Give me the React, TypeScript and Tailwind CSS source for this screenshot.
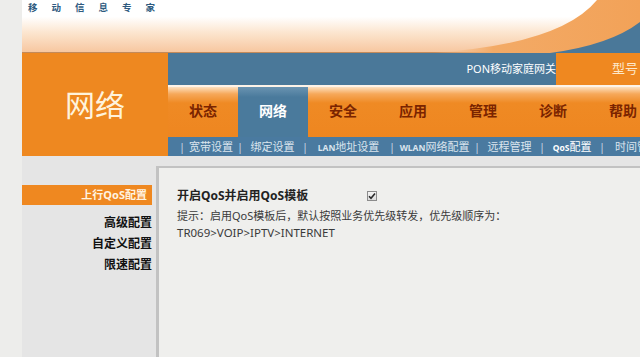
import React from 'react';

const tabs = ['状态', '网络', '安全', '应用', '管理', '诊断', '帮助'];
// [latin prefix, chinese part, segment width]
const subTabs: [string, string, number][] = [
  ['', '宽带设置', 58],
  ['', '绑定设置', 65],
  ['LAN', '地址设置', 87],
  ['WLAN', '网络配置', 85],
  ['', '远程管理', 65],
  ['QoS', '配置', 60],
  ['', '时间管理', 70],
];
const sideItems = ['高级配置', '自定义配置', '限速配置'];

function Swoosh() {
  return (
    <svg className="pointer-events-none absolute inset-0" width="618" height="53" viewBox="22 0 618 53">
      <defs>
        <linearGradient id="sw" x1="0" y1="0" x2="1" y2="0">
          <stop offset="0" stopColor="#f6c69a" stopOpacity="0" />
          <stop offset="0.3" stopColor="#f3aa66" />
          <stop offset="1" stopColor="#f2a258" />
        </linearGradient>
      </defs>
      <path d="M597 0 Q560 45 430 53 L640 53 L640 0 Z" fill="url(#sw)" />
      <path d="M550 53 Q610 45 640 22 L640 53 Z" fill="#4a7899" />
    </svg>
  );
}

function Check() {
  return (
    <span className="flex h-[10px] w-[10px] items-center justify-center border border-[#8c8c8c] bg-[linear-gradient(to_bottom,#f4f4f4,#dcdcdc)]">
      <svg width="8" height="8" viewBox="0 0 8 8">
        <path d="M1 4.2 L3 6.3 L7 1.5" fill="none" stroke="#2a2a2a" strokeWidth="1.6" />
      </svg>
    </span>
  );
}

export default function App() {
  return (
    <div className="flex h-[357px] w-[640px] overflow-hidden bg-[#ededeb] font-['Noto_Sans','Noto_Sans_CJK_SC',sans-serif]">
      {/* left margin */}
      <div className="w-[22px] shrink-0 bg-[#ededeb]" />

      <div className="flex w-[618px] shrink-0 flex-col">
        {/* header */}
        <div className="relative h-[53px] shrink-0 border-b border-[#c38a5a] bg-[linear-gradient(to_bottom,#ffffff_0%,#ffffff_32%,#fce6d0_62%,#f7c7a0_100%)]">
          <Swoosh />
          <div className="relative flex pl-[6px] pt-[1px] text-[9.5px] font-bold leading-[14px] text-[#2f5b80]">
            {'移动信息专家'.split('').map((c) => (
              <span key={c} className="w-[23.5px]">{c}</span>
            ))}
          </div>
        </div>

        {/* title + navigation */}
        <div className="flex h-[103px] shrink-0">
          <div className="flex w-[146px] shrink-0 items-center justify-center bg-[#ee8820] text-[30px] leading-none text-[#fff3dc]">
            网络
          </div>
          <div className="flex min-w-0 flex-1 flex-col overflow-hidden">
            <div className="flex h-[32px]">
              <div className="flex flex-1 items-center justify-end bg-[#4a7899] text-[11px] text-white">PON移动家庭网关</div>
              <div className="flex w-[84px] shrink-0 items-center overflow-hidden whitespace-nowrap bg-[#ef8820] pl-[56px] text-[13px] text-[#fde9cc]">型号</div>
            </div>
            <div className="h-[2px] bg-[#fdf3e8]" />
            <div className="flex h-[50px] bg-[linear-gradient(to_bottom,#fde0bf_0%,#f6a85a_14%,#ef8a24_32%,#ee8620_100%)]">
              {tabs.map((t) => (
                <div
                  key={t}
                  className={
                    t === '网络'
                      ? 'flex w-[70px] shrink-0 items-center justify-center bg-[linear-gradient(to_bottom,#6a93b1_0%,#4a7a9c_20%,#4a7a9c_100%)] pb-[4px] text-[14px] font-bold text-white'
                      : 'flex w-[70px] shrink-0 items-center justify-center pb-[4px] text-[14px] font-bold text-[#7a2400]'
                  }
                >
                  {t}
                </div>
              ))}
            </div>
            <div className="flex h-[19px] items-center whitespace-nowrap bg-[#4a7aa0] pl-[11px] text-[11px] leading-none text-[#dbe5ee]">
              {subTabs.map(([latin, zh, w]) => (
                <span key={zh + latin} className="flex shrink-0 items-center" style={{ width: w }}>
                  <span className="text-[#c9d7e3]">|</span>
                  <span className={latin === 'QoS' ? 'flex-1 text-center text-white' : 'flex-1 text-center'}>
                    {latin && <span className="text-[8.5px] font-bold">{latin}</span>}
                    {zh}
                  </span>
                </span>
              ))}
            </div>
          </div>
        </div>

        {/* body */}
        <div className="flex flex-1 bg-[#e5e5e5]">
          <div className="flex w-[134px] shrink-0 flex-col items-end pr-[4px] pt-[29px]">
            <div className="flex h-[20px] w-[130px] items-center justify-end bg-[#ef8820] pr-[5px] text-[11px] font-bold text-[#fff3e0]">
              上行QoS配置
            </div>
            <div className="flex flex-col items-end pt-[7px] text-[12px] font-bold leading-[21px] text-[#111]">
              {sideItems.map((s) => (
                <span key={s}>{s}</span>
              ))}
            </div>
          </div>

          <div className="mt-[10px] flex-1 border-l-[3px] border-t-2 border-[#c2c2c2] bg-[#efefed] pl-[18px] pt-[20px] text-[#3a3a3a]">
            <div className="flex h-[16px] items-center">
              <span className="w-[190px] text-[12px] font-bold text-[#222]">开启QoS并启用QoS模板</span>
              <Check />
            </div>
            <div className="mt-[3px] text-[11px] leading-[17px]">
              提示：启用QoS模板后，默认按照业务优先级转发，优先级顺序为：
            </div>
            <div className="text-[11.5px] leading-[17px]">TR069&gt;VOIP&gt;IPTV&gt;INTERNET</div>
          </div>
        </div>
      </div>
    </div>
  );
}
